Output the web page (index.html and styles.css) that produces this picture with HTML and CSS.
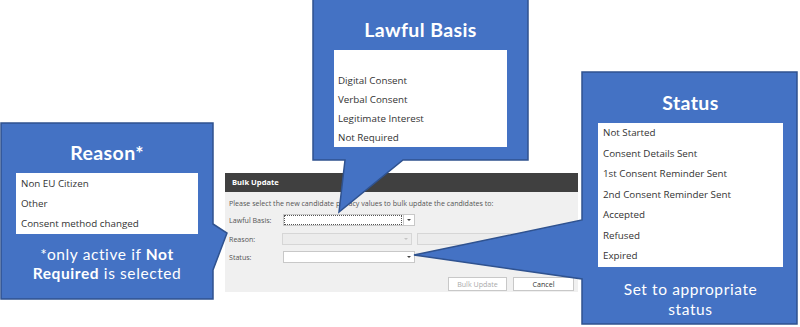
FILE: index.html
```html
<!DOCTYPE html>
<html lang="en">
<head>
    <meta charset="UTF-8">
    <meta name="viewport" content="width=device-width, initial-scale=1.0">
    <title>Bulk Update - Privacy Values</title>
    <link rel="stylesheet" href="styles.css">
</head>
<body>
    <div class="slide">
        <!-- The dialog being annotated -->
        <div class="dialog">
            <div class="dialog-title">Bulk Update</div>
            <div class="dialog-body">
                <p class="hint">Please select the new candidate privacy values to bulk update the candidates to:</p>
                <div class="field">
                    <span class="label">Lawful Basis:</span>
                    <span class="combo">
                        <span class="combo-text focus"></span>
                        <span class="combo-btn split"><span class="arrow"></span></span>
                    </span>
                </div>
                <div class="field">
                    <span class="label">Reason:</span>
                    <span class="combo disabled">
                        <span class="combo-text"></span>
                        <span class="combo-btn"><span class="arrow"></span></span>
                    </span>
                    <span class="textbox disabled"></span>
                </div>
                <div class="field">
                    <span class="label">Status:</span>
                    <span class="combo">
                        <span class="combo-text"></span>
                        <span class="combo-btn"><span class="arrow"></span></span>
                    </span>
                </div>
                <div class="actions">
                    <span class="btn disabled">Bulk Update</span>
                    <span class="btn">Cancel</span>
                </div>
            </div>
        </div>

        <!-- Callout shapes -->
        <svg class="shapes" width="800" height="327" viewBox="0 0 800 327">
            <polygon points="1,123 213,123 213,224 227,233 213,270 213,299 1,299" />
            <polygon points="313,-2 528,-2 528,160 403,160 339,212 345,160 313,160" />
            <polygon points="582,72 797,72 797,324 582,324 582,279 414,255 582,220" />
        </svg>

        <div class="callout callout-reason">
            <div class="callout-title">Reason*</div>
            <ul class="options">
                <li>Non EU Citizen</li>
                <li>Other</li>
                <li>Consent method changed</li>
            </ul>
            <p class="note">*only active if <b>Not<br>Required</b> is selected</p>
        </div>

        <div class="callout callout-lawful">
            <div class="callout-title">Lawful Basis</div>
            <ul class="options">
                <li>Digital Consent</li>
                <li>Verbal Consent</li>
                <li>Legitimate Interest</li>
                <li>Not Required</li>
            </ul>
        </div>

        <div class="callout callout-status">
            <div class="callout-title">Status</div>
            <ul class="options">
                <li>Not Started</li>
                <li>Consent Details Sent</li>
                <li>1st Consent Reminder Sent</li>
                <li>2nd Consent Reminder Sent</li>
                <li>Accepted</li>
                <li>Refused</li>
                <li>Expired</li>
            </ul>
            <p class="note">Set to appropriate<br>status</p>
        </div>
    </div>
</body>
</html>
```

FILE: styles.css
```css
body {
    margin: 0;
    background: #fff;
    font-family: "Open Sans", Arial, sans-serif;
}

.slide {
    position: relative;
    width: 800px;
    height: 327px;
    overflow: hidden;
}

/* Dialog */
.dialog {
    position: absolute;
    left: 225px;
    top: 173px;
    width: 353px;
    height: 119px;
    background: #f0f0f0;
    color: #555;
    font-size: 7.1px;
}

.dialog-title {
    height: 19px;
    line-height: 19px;
    padding-left: 7px;
    background: #404040;
    color: #fff;
    font-weight: bold;
    font-size: 7.6px;
}

.dialog-body {
    padding: 5px 4px 0 4px;
}

.hint {
    margin: 0 0 5px 0;
    height: 12px;
    line-height: 12px;
}

.field {
    display: flex;
    align-items: center;
    height: 12px;
    margin-bottom: 6.5px;
}

.label {
    width: 54px;
}

.combo {
    display: flex;
    width: 132px;
    height: 12px;
    box-sizing: border-box;
    border: 1px solid #c8c8c8;
    background: #fff;
}

.combo-text {
    flex: 1;
}

.combo-text.focus {
    border: 1px dotted #555;
    margin: 0 1px 0 0;
}

.combo-btn {
    width: 10px;
    display: flex;
    align-items: center;
    justify-content: center;
}

.combo-btn.split {
    border-left: 1px solid #c8c8c8;
}

.arrow {
    width: 0;
    height: 0;
    border-left: 2px solid transparent;
    border-right: 2px solid transparent;
    border-top: 2px solid #444;
}

.combo.disabled {
    background: #ececec;
    border-color: #d6d6d6;
}

.combo.disabled .arrow {
    border-top-color: #c4c4c4;
}

.textbox {
    margin-left: 5px;
    width: 160px;
    height: 12px;
    box-sizing: border-box;
    border: 1px solid #d6d6d6;
    background: #ececec;
}

.actions {
    display: flex;
    justify-content: flex-end;
    gap: 6px;
    padding-top: 7px;
}

.btn {
    width: 61px;
    height: 14px;
    line-height: 12px;
    box-sizing: border-box;
    border: 1px solid #c8c8c8;
    background: #fff;
    color: #333;
    text-align: center;
}

.btn.disabled {
    width: 59px;
    color: #aaa;
}

/* Callouts */
.shapes {
    position: absolute;
    left: 0;
    top: 0;
}

.shapes polygon {
    fill: #4472c4;
    stroke: #2f528f;
    stroke-width: 1.5;
}

.callout {
    position: absolute;
    box-sizing: border-box;
    display: flex;
    flex-direction: column;
    align-items: stretch;
    color: #fff;
}

.callout-title {
    font-family: Lato, "Noto Sans", sans-serif;
    font-weight: bold;
    font-size: 19.5px;
    letter-spacing: 0.4px;
    line-height: 24px;
    text-align: center;
    margin-bottom: 8px;
}

.options {
    list-style: none;
    margin: 0;
    padding: 0;
    background: #fff;
    color: #333;
    font-size: 9.8px;
}

.options li {
    padding-left: 5px;
}

.note {
    margin: 0;
    font-family: Lato, "Noto Sans", sans-serif;
    font-size: 15.5px;
    text-align: center;
    letter-spacing: 0.6px;
}

.callout-reason {
    left: 1px;
    top: 123px;
    width: 212px;
    padding: 18px 15px 0 15px;
}

.callout-reason .options {
    padding: 1px 0 0 0;
}

.callout-reason .options li {
    line-height: 20px;
}

.callout-reason .note {
    margin-top: 11px;
    line-height: 19px;
}

.callout-lawful {
    left: 313px;
    top: -2px;
    width: 215px;
    padding: 20px 21px 0 21px;
}

.callout-lawful .options {
    padding: 20.5px 0 0.5px 0;
}

.callout-lawful .options li {
    line-height: 19px;
    padding-left: 4px;
}

.callout-status {
    left: 582px;
    top: 72px;
    width: 215px;
    padding: 19px 14px 0 16px;
}

.callout-status .options li {
    line-height: 20.5px;
}

.callout-status .note {
    margin-top: 12px;
    line-height: 20px;
}
```
